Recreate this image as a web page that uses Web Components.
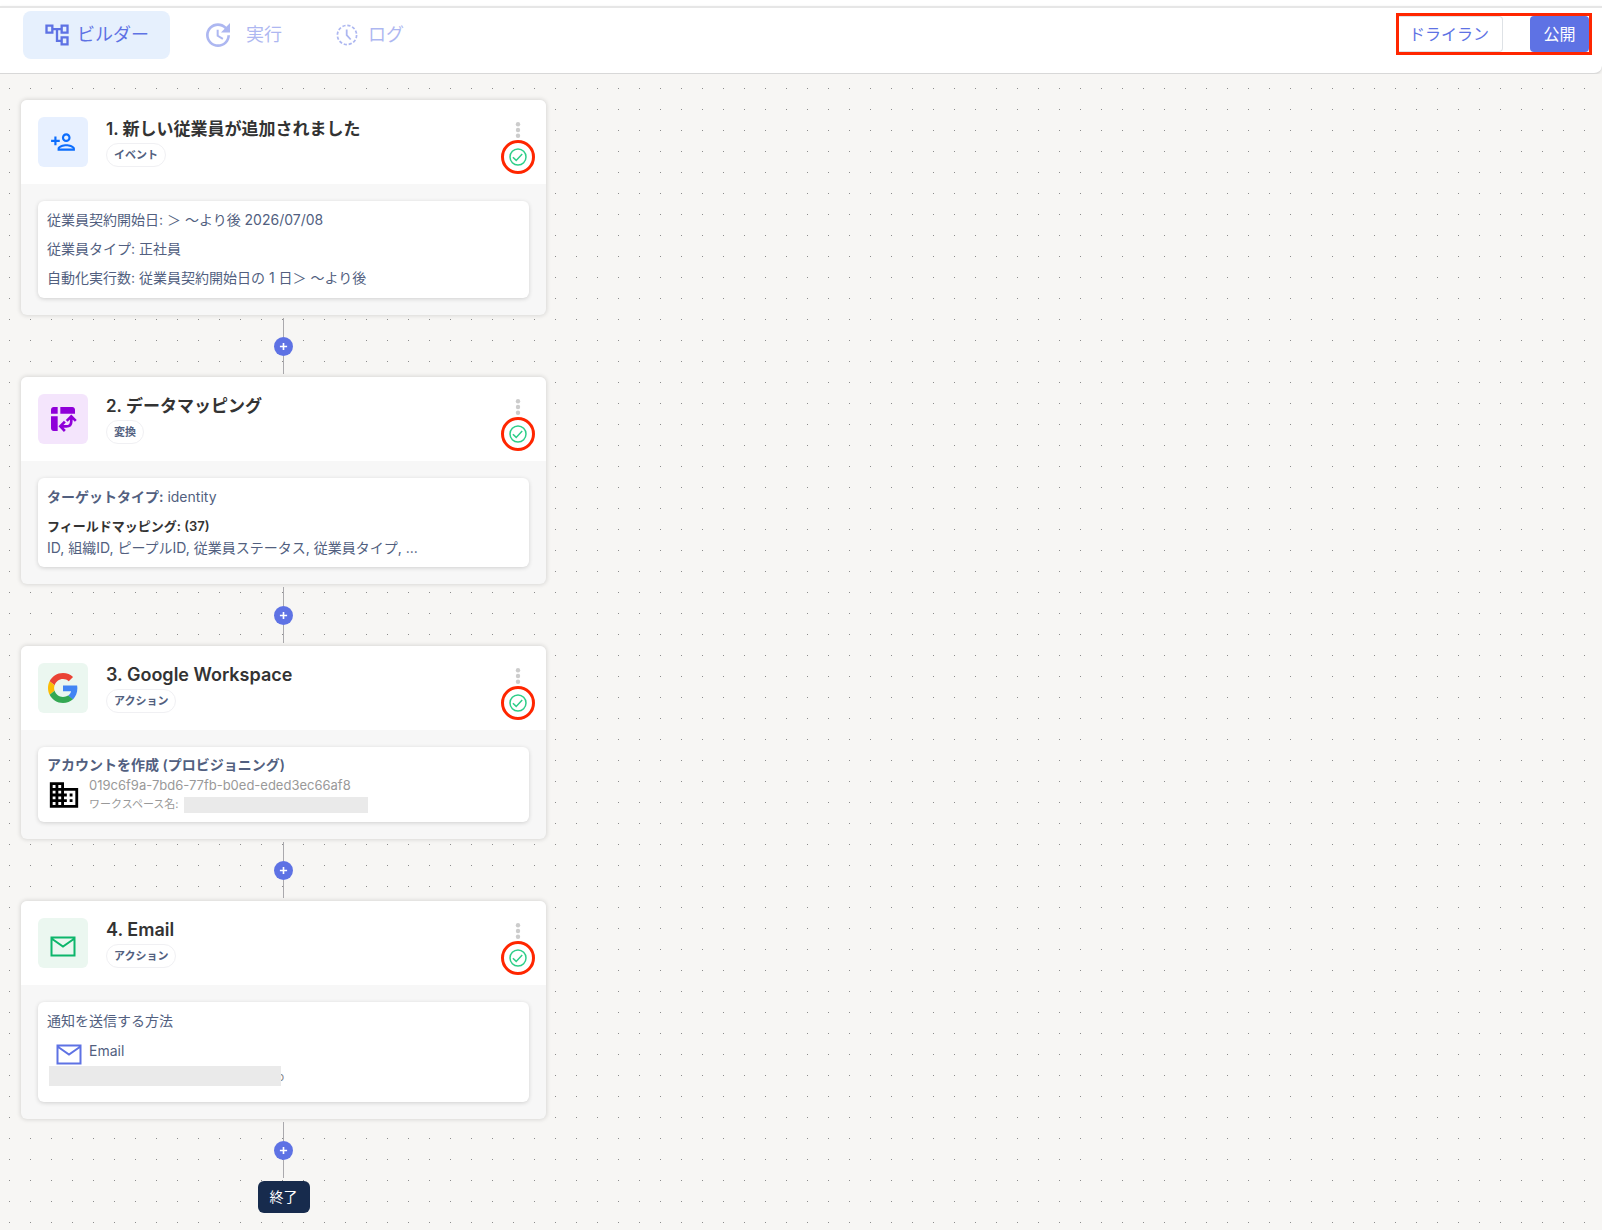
<!DOCTYPE html>
<html lang="ja">
<head>
<meta charset="utf-8">
<meta name="viewport" content="width=device-width, initial-scale=1">
<title>ビルダー</title>
<style>
  :root {
    --primary: #5e72e4;
    --text: #525f7f;
    --mark: #ff2600;
    --canvas: #f7f6f4;
  }
  body {
    margin: 0;
    color: var(--text);
    font: 14px/21px Inter, "Noto Sans CJK JP", sans-serif;
  }
</style>
</head>
<body>
<flow-app></flow-app>

<script>
const defineElement = (tag, { styles = "", render }) =>
  customElements.define(
    tag,
    class extends HTMLElement {
      connectedCallback() {
        if (this.shadowRoot) return;
        const template = document.createElement("template");
        template.innerHTML = `
          <style>
            *, *::before, *::after { box-sizing: border-box; }
            :host { display: block; box-sizing: border-box; }
            button { margin: 0; padding: 0; border: 0; background: none; font: inherit; color: inherit; cursor: pointer; }
            ${styles}
          </style>
          ${render(this)}`;
        this.attachShadow({ mode: "open" }).append(template.content.cloneNode(true));
      }
    }
  );

// name: [viewBox size, shapes]
const icons = {
  tree: [24, `<path d="M22 11V3h-7v3H9V3H2v8h7V8h2v10h4v3h7v-8h-7v3h-2V8h2v3h7zM7 9H4V5h3v4zm10 6h3v4h-3v-4zm0-10h3v4h-3V5z"/>`],
  update: [24, `<path d="M21 10.12h-6.78l2.74-2.82c-2.73-2.7-7.15-2.8-9.88-.1-2.73 2.71-2.73 7.08 0 9.79s7.15 2.71 9.88 0C18.32 15.65 19 14.08 19 12.1h2c0 1.98-.88 4.55-2.64 6.29-3.51 3.48-9.21 3.48-12.72 0-3.5-3.47-3.53-9.11-.02-12.58s9.14-3.47 12.65 0L21 3v7.12zM12.5 8v4.25l3.5 2.08-.72 1.21L11 13V8h1.5z"/>`],
  log: [24, `<g fill="none" stroke="currentColor" stroke-width="1.7"><circle cx="12" cy="12" r="9.6" stroke-dasharray="3.2 1.83"/><path stroke-width="1.8" d="M11.7 6.5v5.7l4 4.3"/></g>`],
  person: [24, `<path d="M15 12c2.21 0 4-1.79 4-4s-1.79-4-4-4-4 1.79-4 4 1.79 4 4 4zm0-6c1.1 0 2 .9 2 2s-.9 2-2 2-2-.9-2-2 .9-2 2-2zm0 8c-2.67 0-8 1.34-8 4v2h16v-2c0-2.66-5.33-4-8-4zm-6 4c.22-.72 3.31-2 6-2 2.7 0 5.8 1.29 6 2H9zm-3-3v-3h3v-2H6V7H4v3H1v2h3v3z"/>`],
  pivot: [24, `<path d="M10 8h11V5c0-1.1-.9-2-2-2h-9zM3 8h5V3H5c-1.1 0-2 .9-2 2zM5 21h3V10H3v9c0 1.1.9 2 2 2z"/><path fill="none" stroke="currentColor" stroke-width="2" d="M14.8 13.4l3.4-3.4 3.4 3.4M13.4 14l-3.4 3.5 3.4 3.5M10.5 17.5h4q3.7 0 3.7-3.7v-3"/>`],
  google: [48, `<path fill="#ea4335" d="M24 9.5c3.54 0 6.71 1.22 9.21 3.6l6.85-6.85C35.9 2.38 30.47 0 24 0 14.62 0 6.51 5.38 2.56 13.22l7.98 6.19C12.43 13.72 17.74 9.5 24 9.5z"/><path fill="#4285f4" d="M46.98 24.55c0-1.57-.15-3.09-.38-4.55H24v9.02h12.94c-.58 2.96-2.26 5.48-4.78 7.18l7.73 6c4.51-4.18 7.09-10.36 7.09-17.65z"/><path fill="#fbbc05" d="M10.53 28.59c-.48-1.45-.76-2.99-.76-4.59s.27-3.14.76-4.59l-7.98-6.19C.92 16.46 0 20.12 0 24c0 3.88.92 7.54 2.56 10.78l7.97-6.19z"/><path fill="#34a853" d="M24 48c6.48 0 11.93-2.13 15.89-5.81l-7.73-6c-2.15 1.45-4.92 2.3-8.16 2.3-6.26 0-11.57-4.22-13.47-9.91l-7.98 6.19C6.51 42.62 14.62 48 24 48z"/>`],
  mail: [32, `<path fill="none" stroke="currentColor" stroke-width="2" d="M4.5 10.5h23v18h-23zM4.5 11.5l11.5 8 11.5-8"/>`],
  building: [24, `<path d="M12 7V3H2v18h20V7H12zM6 19H4v-2h2v2zm0-4H4v-2h2v2zm0-4H4V9h2v2zm0-4H4V5h2v2zm4 12H8v-2h2v2zm0-4H8v-2h2v2zm0-4H8V9h2v2zm0-4H8V5h2v2zm10 12h-8v-2h2v-2h-2v-2h2v-2h-2V9h8v10zm-2-8h-2v2h2v-2zm0 4h-2v2h2v-2z"/>`],
  kebab: [16, `<circle cx="8" cy="2.3" r="2.2"/><circle cx="8" cy="8" r="2.2"/><circle cx="8" cy="13.7" r="2.2"/>`],
  check: [18, `<g fill="none" stroke="currentColor" stroke-width="1.5"><circle cx="9" cy="9" r="8"/><path d="M3.9 9.2l3.3 3.2 6-6.4"/></g>`],
  plus: [10, `<path fill="none" stroke="currentColor" stroke-width="1.8" d="M5 1v8M1 5h8"/>`]
};

defineElement("flow-icon", {
  styles: `
    :host { display: inline-block; flex: none; width: var(--size, 24px); height: var(--size, 24px); }
    svg { display: block; width: 100%; height: 100%; fill: currentColor; }
  `,
  render: host => {
    const [box, shape] = icons[host.getAttribute("name")];
    return `<svg viewBox="0 0 ${box} ${box}" aria-hidden="true">${shape}</svg>`;
  }
});

defineElement("flow-tab", {
  styles: `
    button {
      display: flex; align-items: center; gap: 6px;
      height: 48px; padding: 0 21px 0 20px; border-radius: 8px;
      font-size: 18px; line-height: 24px; color: var(--primary);
      white-space: nowrap;
    }
    flow-icon { --size: 28px; }
    :host([active]) button { background: #e6f0fd; }
    :host(:not([active])) button { opacity: .5; }
    :host([icon="update"]) button { gap: 12px; }
    :host([icon="update"]) flow-icon { --size: 32px; }
    :host([icon="log"]) flow-icon { --size: 24px; }
    :host([icon="log"]) button { gap: 9px; }
  `,
  render: host => `
    <button type="button" ${host.hasAttribute("active") ? 'aria-current="page"' : ""}>
      <flow-icon name="${host.getAttribute("icon")}"></flow-icon>
      <slot></slot>
    </button>`
});

defineElement("flow-toolbar", {
  styles: `
    :host { border-top: 6px solid #fff; }
    header {
      display: flex; justify-content: space-between; align-items: flex-start;
      height: 68px; padding: 3px 10px 0 23px;
      background: #fff; border-top: 2px solid #e6e6e6; border-bottom: 1px solid #d8d8d8;
      border-bottom-right-radius: 8px;
      box-shadow: 0 1px 3px rgb(0 0 0 / 12%);
    }
    nav { display: flex; gap: 12px; }
    .actions { display: flex; gap: 27px; margin-top: 2px; border: 3px solid var(--mark); }
    .actions button { height: 36px; font-size: 16px; line-height: 24px; white-space: nowrap; }
    .dry {
      width: 104px; padding-right: 3px; color: var(--primary);
      border: solid #dee2e6; border-width: 1px 1px 1px 0; border-radius: 0 4px 4px 0;
    }
    .publish { width: 59px; color: #fff; background: var(--primary); border-radius: 4px; }
  `,
  render: () => `
    <header>
      <nav>
        <flow-tab icon="tree" active>ビルダー</flow-tab>
        <flow-tab icon="update">実行</flow-tab>
        <flow-tab icon="log">ログ</flow-tab>
      </nav>
      <div class="actions">
        <button type="button" class="dry">ドライラン</button>
        <button type="button" class="publish">公開</button>
      </div>
    </header>`
});

defineElement("flow-step", {
  styles: `
    :host {
      background: #f7f7f7; border-radius: 6px;
      box-shadow: 0 0 4px 1px rgb(0 0 0 / 12%);
    }
    header {
      display: flex; gap: 18px; height: 84px; padding: 17px 11px 0 17px;
      background: #fff; border-radius: 6px 6px 0 0;
    }
    .badge {
      display: grid; place-items: center; flex: none;
      width: 50px; height: 50px; border-radius: 6px;
    }
    .event { color: #0d6efd; background: #e7f0ff; }
    .transform { color: #8f00d9; background: #f4e5fc; }
    .action { color: #0db66b; background: #ebf7f0; }
    .badge flow-icon { --size: 32px; }
    .badge flow-icon[name="person"] { --size: 26px; }
    .badge flow-icon[name="google"] { --size: 30px; }
    .titles { flex: 1; min-width: 0; }
    h2 { margin: 0 0 2px; font-size: 17px; line-height: 24px; font-weight: 600; color: #333; }
    h2:lang(en) { font-size: 18px; }
    .kind {
      display: inline-block; height: 24px; padding: 0 7px;
      border: 1px solid #f0f0f3; border-radius: 12px;
      font-size: 11px; line-height: 22px; font-weight: 600;
    }
    .state { display: flex; flex-direction: column; align-items: center; gap: 2px; padding-top: 5px; }
    .state button { height: 16px; color: #ccc; }
    .state button flow-icon { --size: 16px; display: block; }
    .ring {
      display: grid; place-items: center; width: 34px; height: 34px;
      border: 3px solid var(--mark); border-radius: 50%; color: #2dce89;
    }
    .ring flow-icon { --size: 18px; }
    .body { padding: 17px; }
    .panel { background: #fff; border-radius: 6px; box-shadow: 0 1px 4px rgb(0 0 0 / 16%); }
  `,
  render: host => `
    <header>
      <div class="badge ${host.getAttribute("tone")}">
        <flow-icon name="${host.getAttribute("icon")}"></flow-icon>
      </div>
      <div class="titles">
        <h2 lang="${host.getAttribute("heading-lang") ?? "ja"}">${host.getAttribute("heading")}</h2>
        <span class="kind">${host.getAttribute("kind")}</span>
      </div>
      <div class="state">
        <button type="button" aria-label="メニュー"><flow-icon name="kebab"></flow-icon></button>
        <div class="ring"><flow-icon name="check"></flow-icon></div>
      </div>
    </header>
    <div class="body"><div class="panel"><slot></slot></div></div>`
});

defineElement("flow-connector", {
  styles: `
    :host { display: flex; flex-direction: column; align-items: center; height: 62px; padding: 3px 0; }
    i { flex: 1; width: 1px; background: #aaa9ad; }
    button {
      display: grid; place-items: center; width: 19px; height: 19px;
      border-radius: 50%; color: #fff; background: var(--primary);
    }
    flow-icon { --size: 9px; }
  `,
  render: () => `
    <i></i>
    <button type="button" aria-label="追加"><flow-icon name="plus"></flow-icon></button>
    <i></i>`
});

defineElement("step-conditions", {
  styles: `
    :host { padding: 4px 9px 6px; line-height: 29px; }
    p { margin: 0; }
  `,
  render: () => `
    <p>従業員契約開始日: ＞ 〜より後 2026/07/08</p>
    <p>従業員タイプ: 正社員</p>
    <p>自動化実行数: 従業員契約開始日の 1 日＞ 〜より後</p>`
});

defineElement("step-mapping", {
  styles: `
    :host { padding: 4px 9px 9px; line-height: 21px; }
    p { margin: 0; }
    .target { margin-bottom: 5px; line-height: 29px; }
    b { font-weight: 600; }
    .fields { font-size: 13px; color: #333; }
  `,
  render: () => `
    <p class="target"><b>ターゲットタイプ:</b> identity</p>
    <p class="fields"><b>フィールドマッピング: (37)</b></p>
    <p>ID, 組織ID, ピープルID, 従業員ステータス, 従業員タイプ, ...</p>`
});

defineElement("step-workspace", {
  styles: `
    :host { padding: 7px 9px; }
    h3 { margin: 0; font-size: 14px; line-height: 21px; font-weight: 600; }
    .account { display: flex; align-items: center; gap: 8px; height: 40px; line-height: 19px; color: #999; }
    .account > flow-icon { --size: 34px; color: #000; }
    p { margin: 0; font-size: 13px; }
    .name { display: flex; align-items: center; gap: 5px; font-size: 11px; }
    .mask { width: 184px; height: 16px; background: #eaeaea; }
  `,
  render: () => `
    <h3>アカウントを作成 (プロビジョニング)</h3>
    <div class="account">
      <flow-icon name="building"></flow-icon>
      <div>
        <p>019c6f9a-7bd6-77fb-b0ed-eded3ec66af8</p>
        <p class="name">ワークスペース名: <span class="mask"></span></p>
      </div>
    </div>`
});

defineElement("step-notify", {
  styles: `
    :host { padding: 4px 9px 16px; }
    p { margin: 0; line-height: 29px; }
    .method { display: flex; gap: 4px; height: 31px; padding-left: 6px; line-height: 32px; }
    flow-icon { --size: 32px; color: var(--primary); }
    .address { display: flex; align-items: center; height: 20px; padding-left: 2px; font-size: 12px; color: #888; }
    .mask { position: relative; width: 232px; height: 20px; margin-right: -4px; background: #eaeaea; }
  `,
  render: () => `
    <p>通知を送信する方法</p>
    <div class="method"><flow-icon name="mail"></flow-icon>Email</div>
    <div class="address"><span class="mask"></span>o</div>`
});

defineElement("flow-app", {
  styles: `
    :host {
      display: flex; flex-direction: column; min-height: 100vh;
      background: var(--canvas);
    }
    /* 1px grey rows, covered except for one pixel in every 21 */
    main {
      flex: 1; padding: 26px 21px 18px;
      background:
        linear-gradient(90deg, var(--canvas) 20px, transparent 0) 10px 0 / 21px 21px,
        linear-gradient(var(--canvas) 20px, #8c8c8c 0) 0 15px / 21px 21px;
    }
    .flow { display: flex; flex-direction: column; max-width: 525px; }
    .end {
      align-self: center; padding: 4px 12px; border-radius: 6px;
      line-height: 24px; color: #fff; background: #172b4d;
    }
  `,
  render: () => `
    <flow-toolbar></flow-toolbar>
    <main>
      <div class="flow">
        <flow-step icon="person" tone="event" heading="1. 新しい従業員が追加されました" kind="イベント">
          <step-conditions></step-conditions>
        </flow-step>
        <flow-connector></flow-connector>
        <flow-step icon="pivot" tone="transform" heading="2. データマッピング" kind="変換">
          <step-mapping></step-mapping>
        </flow-step>
        <flow-connector></flow-connector>
        <flow-step icon="google" tone="action" heading="3. Google Workspace" heading-lang="en" kind="アクション">
          <step-workspace></step-workspace>
        </flow-step>
        <flow-connector></flow-connector>
        <flow-step icon="mail" tone="action" heading="4. Email" heading-lang="en" kind="アクション">
          <step-notify></step-notify>
        </flow-step>
        <flow-connector></flow-connector>
        <div class="end">終了</div>
      </div>
    </main>`
});
</script>
</body>
</html>
